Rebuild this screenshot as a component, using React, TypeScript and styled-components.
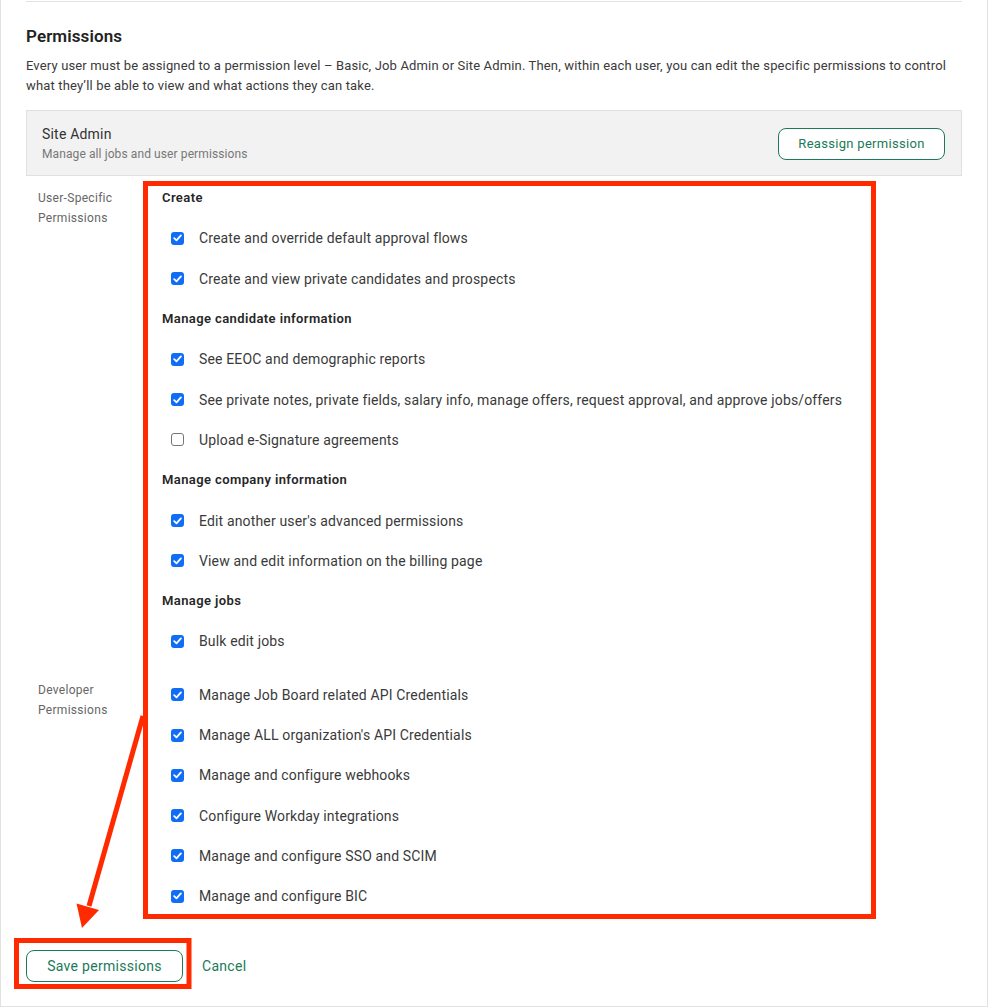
import React from "react";
import styled, { createGlobalStyle } from "styled-components";

const Global = createGlobalStyle`
  html, body { margin: 0; padding: 0; background: #fff; }
  body {
    font-family: Roboto, "Liberation Sans", Arial, sans-serif;
    color: #333;
    -webkit-font-smoothing: antialiased;
  }
  * { box-sizing: border-box; }
`;

const Page = styled.div`
  position: relative;
  width: 989px;
  min-height: 1008px;
`;

const Card = styled.section`
  width: 988px;
  border: 1px solid #e2e2e2;
  border-top: none;
  padding: 1px 25px 24px;
`;

const Divider = styled.hr`
  margin: 0;
  border: none;
  border-top: 1px solid #e3e3e3;
`;

const Title = styled.h2`
  margin: 24px 0 0;
  font-size: 17px;
  line-height: 20px;
  font-weight: 600;
  color: #222;
  letter-spacing: 0.1px;
`;

const Description = styled.p`
  margin: 10px 0 0;
  font-size: 13px;
  line-height: 20px;
  color: #3a3a3a;
  letter-spacing: 0.15px;
`;

const LevelBox = styled.div`
  margin-top: 14px;
  display: flex;
  align-items: center;
  justify-content: space-between;
  background: #f2f2f2;
  border: 1px solid #e0e0e0;
  padding: 12px 16px 11px 15px;
`;

const LevelText = styled.div`
  padding-top: 1px;
`;

const LevelName = styled.div`
  font-size: 14px;
  line-height: 20px;
  color: #333;
  letter-spacing: 0.2px;
`;

const LevelHint = styled.div`
  font-size: 12px;
  line-height: 20px;
  color: #777;
  letter-spacing: 0.1px;
`;

const OutlineButton = styled.button<{ $width: number; $size: number }>`
  width: ${(p) => p.$width}px;
  height: 32px;
  border: 1px solid #1b7a57;
  border-radius: 8px;
  background: #fff;
  color: #1b7a57;
  font-family: inherit;
  font-size: ${(p) => p.$size}px;
  letter-spacing: 0.3px;
  padding: 0;
  cursor: pointer;
`;

const Groups = styled.div`
  margin-top: 12px;
  padding-left: 12px;
`;

const Group = styled.div<{ $gap: number }>`
  display: grid;
  grid-template-columns: 124px 1fr;
  margin-top: ${(p) => p.$gap}px;
`;

const GroupLabel = styled.div<{ $offset: number }>`
  padding-top: ${(p) => p.$offset}px;
  font-size: 12px;
  line-height: 20px;
  color: #666;
  letter-spacing: 0.3px;
`;

const GroupBody = styled.div`
  display: flex;
  flex-direction: column;
`;

const SectionHeading = styled.div<{ $first?: boolean }>`
  margin: ${(p) => (p.$first ? 0 : 10)}px 0 10.3px;
  font-size: 13px;
  line-height: 20px;
  font-weight: 600;
  color: #262626;
  letter-spacing: 0.4px;
`;

const Item = styled.label`
  height: 40.3px;
  display: flex;
  align-items: center;
  gap: 15px;
  padding-left: 9px;
  font-size: 14px;
  color: #3a3a3a;
  letter-spacing: 0.15px;
`;

const Box = styled.span<{ $checked: boolean }>`
  flex: none;
  width: 13px;
  height: 13px;
  border-radius: 3px;
  display: flex;
  align-items: center;
  justify-content: center;
  background: ${(p) => (p.$checked ? "#0f6ef5" : "#fff")};
  border: ${(p) => (p.$checked ? "none" : "1px solid #767676")};
`;

const Actions = styled.div`
  margin-top: 34px;
  display: flex;
  align-items: center;
  gap: 19px;
`;

const TextButton = styled.button`
  border: none;
  background: none;
  padding: 0;
  color: #1b7a57;
  font-family: inherit;
  font-size: 14px;
  letter-spacing: 0.3px;
  cursor: pointer;
`;

const Overlay = styled.svg`
  position: absolute;
  left: 0;
  top: 0;
  pointer-events: none;
`;

type Perm = { label: string; checked: boolean };
type Section = { title?: string; items: Perm[] };

const userSections: Section[] = [
  {
    title: "Create",
    items: [
      { label: "Create and override default approval flows", checked: true },
      { label: "Create and view private candidates and prospects", checked: true },
    ],
  },
  {
    title: "Manage candidate information",
    items: [
      { label: "See EEOC and demographic reports", checked: true },
      {
        label:
          "See private notes, private fields, salary info, manage offers, request approval, and approve jobs/offers",
        checked: true,
      },
      { label: "Upload e-Signature agreements", checked: false },
    ],
  },
  {
    title: "Manage company information",
    items: [
      { label: "Edit another user's advanced permissions", checked: true },
      { label: "View and edit information on the billing page", checked: true },
    ],
  },
  {
    title: "Manage jobs",
    items: [{ label: "Bulk edit jobs", checked: true }],
  },
];

const devItems: Perm[] = [
  { label: "Manage Job Board related API Credentials", checked: true },
  { label: "Manage ALL organization's API Credentials", checked: true },
  { label: "Manage and configure webhooks", checked: true },
  { label: "Configure Workday integrations", checked: true },
  { label: "Manage and configure SSO and SCIM", checked: true },
  { label: "Manage and configure BIC", checked: true },
];

function Check({ checked }: { checked: boolean }) {
  return (
    <Box $checked={checked}>
      {checked && (
        <svg width="9" height="8" viewBox="0 0 9 8">
          <path
            d="M1.2 4.2 L3.5 6.4 L7.9 1.4"
            fill="none"
            stroke="#fff"
            strokeWidth="1.8"
            strokeLinecap="round"
            strokeLinejoin="round"
          />
        </svg>
      )}
    </Box>
  );
}

function PermItem({ perm }: { perm: Perm }) {
  return (
    <Item>
      <Check checked={perm.checked} />
      <span>{perm.label}</span>
    </Item>
  );
}

export default function App() {
  return (
    <Page>
      <Global />
      <Card>
        <Divider />
        <Title>Permissions</Title>
        <Description>
          Every user must be assigned to a permission level – Basic, Job Admin or Site Admin. Then,
          within each user, you can edit the specific permissions to control what they’ll be able to
          view and what actions they can take.
        </Description>
        <LevelBox>
          <LevelText>
            <LevelName>Site Admin</LevelName>
            <LevelHint>Manage all jobs and user permissions</LevelHint>
          </LevelText>
          <OutlineButton $width={167} $size={13}>
            Reassign permission
          </OutlineButton>
        </LevelBox>
        <Groups>
          <Group $gap={0}>
            <GroupLabel $offset={0}>
              User-Specific
              <br />
              Permissions
            </GroupLabel>
            <GroupBody>
              {userSections.map((s, i) => (
                <React.Fragment key={s.title}>
                  <SectionHeading $first={i === 0}>{s.title}</SectionHeading>
                  {s.items.map((p) => (
                    <PermItem key={p.label} perm={p} />
                  ))}
                </React.Fragment>
              ))}
            </GroupBody>
          </Group>
          <Group $gap={13}>
            <GroupLabel $offset={5}>
              Developer
              <br />
              Permissions
            </GroupLabel>
            <GroupBody>
              {devItems.map((p) => (
                <PermItem key={p.label} perm={p} />
              ))}
            </GroupBody>
          </Group>
        </Groups>
        <Actions>
          <OutlineButton $width={157} $size={14}>
            Save permissions
          </OutlineButton>
          <TextButton>Cancel</TextButton>
        </Actions>
      </Card>
      <Overlay width="989" height="1008" viewBox="0 0 989 1008">
        <rect x="145.5" y="183.5" width="728" height="733" fill="none" stroke="#ff2a00" strokeWidth="5" />
        <rect x="16.5" y="940.5" width="172.5" height="46" fill="none" stroke="#ff2a00" strokeWidth="5" />
        <line x1="143" y1="716" x2="89" y2="906" stroke="#ff2a00" strokeWidth="5" />
        <polygon points="82,928 76.5,903.5 99,910" fill="#ff2a00" />
      </Overlay>
    </Page>
  );
}
